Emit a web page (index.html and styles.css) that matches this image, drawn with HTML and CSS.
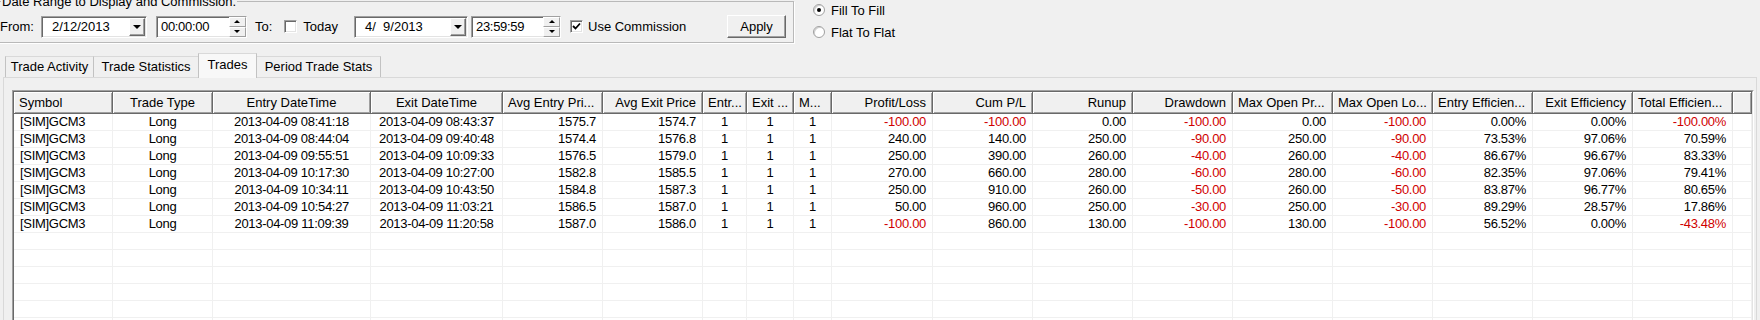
FILE: index.html
```html
<!DOCTYPE html>
<html lang="en">
<head>
    <meta charset="UTF-8">
    <title>Trades</title>
    <link rel="stylesheet" href="styles.css">
</head>
<body>
    <div class="top">
        <fieldset class="range">
            <legend>Date Range to Display and Commission.</legend>
            <div class="range-row">
                <span class="lbl">From:</span>
                <div class="picker date from-date"><span class="val">2/12/2013</span><span class="drop"><i></i></span></div>
                <div class="picker time from-time"><span class="val">00:00:00</span><span class="spin"><b class="up"><i></i></b><b class="down"><i></i></b></span></div>
                <span class="lbl to">To:</span>
                <span class="check today-check"></span>
                <span class="lbl today">Today</span>
                <div class="picker date to-date"><span class="val">4/&nbsp;&nbsp;9/2013</span><span class="drop"><i></i></span></div>
                <div class="picker time to-time"><span class="val">23:59:59</span><span class="spin"><b class="up"><i></i></b><b class="down"><i></i></b></span></div>
                <span class="check checked comm-check"><svg width="9" height="9" viewBox="0 0 9 9"><polyline points="1,4 3.5,6.5 8,1.5" fill="none" stroke="#000" stroke-width="1.8"/></svg></span>
                <span class="lbl comm">Use Commission</span>
                <button class="apply">Apply</button>
            </div>
        </fieldset>
        <div class="modes">
            <div class="mode"><span class="radio on"></span>Fill To Fill</div>
            <div class="mode"><span class="radio"></span>Flat To Flat</div>
        </div>
    </div>

    <div class="tabs">
        <div class="tab">Trade Activity</div>
        <div class="tab">Trade Statistics</div>
        <div class="tab active">Trades</div>
        <div class="tab">Period Trade Stats</div>
    </div>

    <div class="panel">
        <div class="grid">
            <div class="grid-in">
                <table class="trades">
                    <colgroup>
                        <col class="c99"><col class="c100"><col class="c158"><col class="c132"><col class="c100"><col class="c100">
                        <col class="c44"><col class="c47"><col class="c38"><col class="c101">
                        <col class="c100"><col class="c100"><col class="c100"><col class="c100"><col class="c100"><col class="c100"><col class="c100"><col class="c100">
                        <col>
                    </colgroup>
                    <thead>
                        <tr>
                            <th class="left">Symbol</th>
                            <th>Trade Type</th>
                            <th>Entry DateTime</th>
                            <th>Exit DateTime</th>
                            <th class="left">Avg Entry Pri...</th>
                            <th class="right">Avg Exit Price</th>
                            <th class="left tight">Entr...</th>
                            <th class="left tight">Exit ...</th>
                            <th class="left tight">M...</th>
                            <th class="right">Profit/Loss</th>
                            <th class="right">Cum P/L</th>
                            <th class="right">Runup</th>
                            <th class="right">Drawdown</th>
                            <th class="left">Max Open Pr...</th>
                            <th class="left">Max Open Lo...</th>
                            <th class="left">Entry Efficien...</th>
                            <th class="right">Exit Efficiency</th>
                            <th class="left">Total Efficien...</th>
                            <th></th>
                        </tr>
                    </thead>
                    <tbody>
                        <tr><td>[SIM]GCM3</td><td>Long</td><td>2013-04-09 08:41:18</td><td>2013-04-09 08:43:37</td><td>1575.7</td><td>1574.7</td><td>1</td><td>1</td><td>1</td><td class="neg">-100.00</td><td class="neg">-100.00</td><td>0.00</td><td class="neg">-100.00</td><td>0.00</td><td class="neg">-100.00</td><td>0.00%</td><td>0.00%</td><td class="neg">-100.00%</td><td></td></tr>
                        <tr><td>[SIM]GCM3</td><td>Long</td><td>2013-04-09 08:44:04</td><td>2013-04-09 09:40:48</td><td>1574.4</td><td>1576.8</td><td>1</td><td>1</td><td>1</td><td>240.00</td><td>140.00</td><td>250.00</td><td class="neg">-90.00</td><td>250.00</td><td class="neg">-90.00</td><td>73.53%</td><td>97.06%</td><td>70.59%</td><td></td></tr>
                        <tr><td>[SIM]GCM3</td><td>Long</td><td>2013-04-09 09:55:51</td><td>2013-04-09 10:09:33</td><td>1576.5</td><td>1579.0</td><td>1</td><td>1</td><td>1</td><td>250.00</td><td>390.00</td><td>260.00</td><td class="neg">-40.00</td><td>260.00</td><td class="neg">-40.00</td><td>86.67%</td><td>96.67%</td><td>83.33%</td><td></td></tr>
                        <tr><td>[SIM]GCM3</td><td>Long</td><td>2013-04-09 10:17:30</td><td>2013-04-09 10:27:00</td><td>1582.8</td><td>1585.5</td><td>1</td><td>1</td><td>1</td><td>270.00</td><td>660.00</td><td>280.00</td><td class="neg">-60.00</td><td>280.00</td><td class="neg">-60.00</td><td>82.35%</td><td>97.06%</td><td>79.41%</td><td></td></tr>
                        <tr><td>[SIM]GCM3</td><td>Long</td><td>2013-04-09 10:34:11</td><td>2013-04-09 10:43:50</td><td>1584.8</td><td>1587.3</td><td>1</td><td>1</td><td>1</td><td>250.00</td><td>910.00</td><td>260.00</td><td class="neg">-50.00</td><td>260.00</td><td class="neg">-50.00</td><td>83.87%</td><td>96.77%</td><td>80.65%</td><td></td></tr>
                        <tr><td>[SIM]GCM3</td><td>Long</td><td>2013-04-09 10:54:27</td><td>2013-04-09 11:03:21</td><td>1586.5</td><td>1587.0</td><td>1</td><td>1</td><td>1</td><td>50.00</td><td>960.00</td><td>250.00</td><td class="neg">-30.00</td><td>250.00</td><td class="neg">-30.00</td><td>89.29%</td><td>28.57%</td><td>17.86%</td><td></td></tr>
                        <tr><td>[SIM]GCM3</td><td>Long</td><td>2013-04-09 11:09:39</td><td>2013-04-09 11:20:58</td><td>1587.0</td><td>1586.0</td><td>1</td><td>1</td><td>1</td><td class="neg">-100.00</td><td>860.00</td><td>130.00</td><td class="neg">-100.00</td><td>130.00</td><td class="neg">-100.00</td><td>56.52%</td><td>0.00%</td><td class="neg">-43.48%</td><td></td></tr>
                        <tr><td></td><td></td><td></td><td></td><td></td><td></td><td></td><td></td><td></td><td></td><td></td><td></td><td></td><td></td><td></td><td></td><td></td><td></td><td></td></tr>
                        <tr><td></td><td></td><td></td><td></td><td></td><td></td><td></td><td></td><td></td><td></td><td></td><td></td><td></td><td></td><td></td><td></td><td></td><td></td><td></td></tr>
                        <tr><td></td><td></td><td></td><td></td><td></td><td></td><td></td><td></td><td></td><td></td><td></td><td></td><td></td><td></td><td></td><td></td><td></td><td></td><td></td></tr>
                        <tr><td></td><td></td><td></td><td></td><td></td><td></td><td></td><td></td><td></td><td></td><td></td><td></td><td></td><td></td><td></td><td></td><td></td><td></td><td></td></tr>
                        <tr><td></td><td></td><td></td><td></td><td></td><td></td><td></td><td></td><td></td><td></td><td></td><td></td><td></td><td></td><td></td><td></td><td></td><td></td><td></td></tr>
                        <tr><td></td><td></td><td></td><td></td><td></td><td></td><td></td><td></td><td></td><td></td><td></td><td></td><td></td><td></td><td></td><td></td><td></td><td></td><td></td></tr>
                    </tbody>
                </table>
            </div>
        </div>
    </div>
</body>
</html>
```

FILE: styles.css
```css
body {
    margin: 0;
    width: 1760px;
    height: 320px;
    overflow: hidden;
    background-color: #f0f0f0;
    font-family: "Liberation Sans", Arial, sans-serif;
    font-size: 13px;
    color: #000;
}

/* top area */
.top {
    display: flex;
    align-items: flex-start;
    height: 53px;
}
.range {
    box-sizing: border-box;
    width: 802px;
    margin: -6px 0 0 -8px;
    padding: 0 7px 4px 7px;
    border: 1px solid #b9b9b9;
    box-shadow: 1px 1px 0 #fff;
    min-width: 0;
}
.range legend {
    padding: 0 1px;
    margin-left: 1px;
    line-height: 15px;
}
.range-row {
    display: flex;
    align-items: center;
    height: 23px;
    margin-top: 6px;
}
.lbl {
    white-space: nowrap;
    line-height: 15px;
}
.picker {
    box-sizing: border-box;
    display: flex;
    align-items: center;
    height: 22px;
    background-color: #fff;
    border: 1px solid;
    border-color: #a0a0a0 #fff #fff #a0a0a0;
    box-shadow: inset 1px 1px 0 #696969, inset -1px -1px 0 #e3e3e3;
    padding: 1px;
}
.picker .val {
    flex: 1;
    white-space: nowrap;
}
.date .val {
    padding-left: 9px;
}
.time .val {
    padding-left: 3px;
    letter-spacing: -0.3px;
}
.from-date { margin-left: 7px; width: 106px; }
.from-time { margin-left: 9px; width: 91px; }
.to { margin-left: 8px; }
.today-check { margin-left: 12px; }
.today { margin-left: 6px; }
.to-date { margin-left: 16px; width: 114px; }
.to-time { margin-left: 3px; width: 90px; }
.comm-check { margin-left: 9px; }
.comm { margin-left: 5px; }

.drop {
    box-sizing: border-box;
    width: 16px;
    height: 18px;
    display: flex;
    align-items: center;
    justify-content: center;
    background-color: #f0f0f0;
    border: 1px solid;
    border-color: #fff #696969 #696969 #fff;
    box-shadow: inset -1px -1px 0 #a0a0a0;
}
.drop i {
    width: 0;
    height: 0;
    border-left: 4px solid transparent;
    border-right: 4px solid transparent;
    border-top: 4px solid #000;
}
.spin {
    display: flex;
    flex-direction: column;
    width: 17px;
    height: 20px;
    margin: -1px -1px -1px 0;
}
.spin b {
    box-sizing: border-box;
    flex: 1;
    display: flex;
    align-items: center;
    justify-content: center;
    background-color: #f0f0f0;
    border: 1px solid;
    border-color: #fff #a0a0a0 #a0a0a0 #fff;
}
.spin .up i {
    border-left: 3px solid transparent;
    border-right: 3px solid transparent;
    border-bottom: 3px solid #000;
}
.spin .down i {
    border-left: 3px solid transparent;
    border-right: 3px solid transparent;
    border-top: 3px solid #000;
}
.check {
    box-sizing: border-box;
    width: 13px;
    height: 13px;
    display: flex;
    align-items: center;
    justify-content: center;
    background-color: #fff;
    border: 1px solid;
    border-color: #a0a0a0 #fff #fff #a0a0a0;
    box-shadow: inset 1px 1px 0 #696969, inset -1px -1px 0 #e3e3e3;
}
.apply {
    margin-left: auto;
    box-sizing: border-box;
    width: 59px;
    height: 23px;
    padding: 0;
    font-family: inherit;
    font-size: 13px;
    color: #000;
    background-color: #f0f0f0;
    border: 1px solid;
    border-color: #fff #696969 #696969 #fff;
    box-shadow: inset -1px -1px 0 #a0a0a0;
}

.modes {
    margin: -1px 0 0 19px;
    display: flex;
    flex-direction: column;
}
.mode {
    display: flex;
    align-items: center;
    height: 22px;
    white-space: nowrap;
}
.radio {
    box-sizing: border-box;
    width: 12px;
    height: 12px;
    margin-right: 6px;
    border-radius: 50%;
    background-color: #fff;
    border: 1px solid #a0a0a0;
    box-shadow: inset 1px 1px 0 #d0d0d0;
    display: flex;
    align-items: center;
    justify-content: center;
}
.radio.on::after {
    content: "";
    width: 4px;
    height: 4px;
    border-radius: 50%;
    background-color: #000;
}

/* tabs */
.tabs {
    display: flex;
    align-items: flex-end;
    height: 24px;
    padding-left: 5px;
}
.tab {
    box-sizing: border-box;
    height: 21px;
    line-height: 20px;
    text-align: center;
    white-space: nowrap;
    background-color: #f0f0f0;
    border: 1px solid #c2c2c2;
    border-bottom: none;
    border-top-color: #d9d9d9;
    margin-right: -1px;
}
.tab:nth-child(1) { width: 89px; }
.tab:nth-child(2) { width: 106px; }
.tab:nth-child(3) { width: 59px; }
.tab:nth-child(4) { width: 125px; }
.tab.active {
    position: relative;
    z-index: 1;
    height: 25px;
    line-height: 21px;
    margin-bottom: -1px;
    background-color: #f8f8f8;
}

.panel {
    margin: 0 3px;
    padding: 12px 2px 0 8px;
    border: 1px solid #d9d9d9;
    border-bottom: none;
}

/* list view */
.grid {
    border: 1px solid;
    border-color: #a0a0a0 #fff #fff #a0a0a0;
}
.grid-in {
    border: 1px solid;
    border-color: #696969 #e3e3e3 #e3e3e3 #696969;
    background-color: #fff;
}
.trades {
    width: 100%;
    table-layout: fixed;
    border-collapse: separate;
    border-spacing: 0;
}
.c99 { width: 99px; }
.c100 { width: 100px; }
.c158 { width: 158px; }
.c132 { width: 132px; }
.c44 { width: 44px; }
.c47 { width: 47px; }
.c38 { width: 38px; }
.c101 { width: 101px; }

.trades th {
    box-sizing: border-box;
    height: 22px;
    padding: 0 5px;
    font-weight: normal;
    text-align: center;
    white-space: nowrap;
    overflow: hidden;
    background-color: #f0f0f0;
    border-right: 1px solid #696969;
    border-bottom: 1px solid #696969;
    box-shadow: inset 1px 1px 0 #fff, inset -1px -1px 0 #a0a0a0;
}
.trades th.left { text-align: left; }
.trades th.right { text-align: right; padding-right: 6px; }
.trades th.tight { padding: 0 0 0 5px; }

.trades td {
    box-sizing: border-box;
    height: 17px;
    padding: 0 6px;
    line-height: 16px;
    white-space: nowrap;
    overflow: hidden;
    letter-spacing: -0.3px;
    text-align: right;
    border-right: 1px solid #f0f0f0;
    border-bottom: 1px solid #f0f0f0;
}
.trades td:nth-child(1) { text-align: left; }
.trades td:nth-child(2),
.trades td:nth-child(3),
.trades td:nth-child(4),
.trades td:nth-child(7),
.trades td:nth-child(8),
.trades td:nth-child(9) { text-align: center; }
.trades td.neg { color: #d00000; }
```
